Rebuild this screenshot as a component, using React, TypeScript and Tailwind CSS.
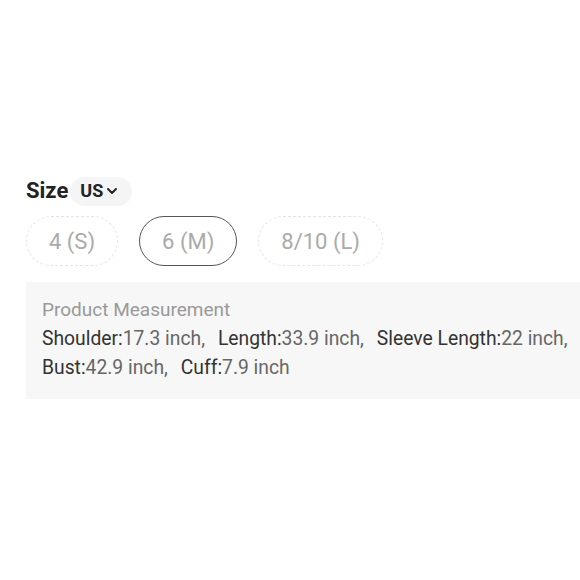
import { ChevronDown } from 'lucide-react';

const sizes = [
  { label: '4 (S)', selected: false },
  { label: '6 (M)', selected: true },
  { label: '8/10 (L)', selected: false },
];

const measures = [
  { k: 'Shoulder', v: '17.3 inch' },
  { k: 'Length', v: '33.9 inch' },
  { k: 'Sleeve Length', v: '22 inch' },
  { k: 'Bust', v: '42.9 inch' },
  { k: 'Cuff', v: '7.9 inch' },
];

export default function App() {
  return (
    <div className="w-[580px] h-[580px] bg-white pt-[175px] pl-[26px] overflow-hidden font-['Roboto','Liberation_Sans',sans-serif]">
      {/* Size header */}
      <div className="flex items-center h-[32px]">
        <span className="text-[22px] font-bold text-[#222] leading-none">Size</span>
        <div className="ml-[2px] flex items-center h-[29px] pl-[10px] pr-[12px] rounded-full bg-[#f5f5f5]">
          <span className="text-[18px] font-bold text-[#222] leading-none">US</span>
          <ChevronDown size={16} strokeWidth={3} className="text-[#222] ml-[1px]" />
        </div>
      </div>

      {/* Size options */}
      <div className="flex gap-[21px] mt-[9px]">
        {sizes.map((s) => (
          <div
            key={s.label}
            className={`h-[50px] px-[22px] flex items-center rounded-full text-[22px] text-[#aaa] ${
              s.selected ? 'border border-[#555]' : 'border border-dashed border-[#e4e4e4]'
            }`}
          >
            {s.label}
          </div>
        ))}
      </div>

      {/* Measurement */}
      <div className="mt-[16px] bg-[#f7f7f7] w-[560px] h-[117px] pl-[16px] pt-[15px]">
        <p className="text-[19px] text-[#999] leading-[26px]">Product Measurement</p>
        <div className="flex flex-wrap text-[19.3px] leading-[29px] mt-[1px]">
          {measures.map((m, i) => (
            <span key={m.k} className="mr-[13px] whitespace-nowrap">
              <span className="text-[#333]">{m.k}:</span>
              <span className="text-[#666]">{m.v}{i < measures.length - 1 ? ',' : ''}</span>
            </span>
          ))}
        </div>
      </div>
    </div>
  );
}
